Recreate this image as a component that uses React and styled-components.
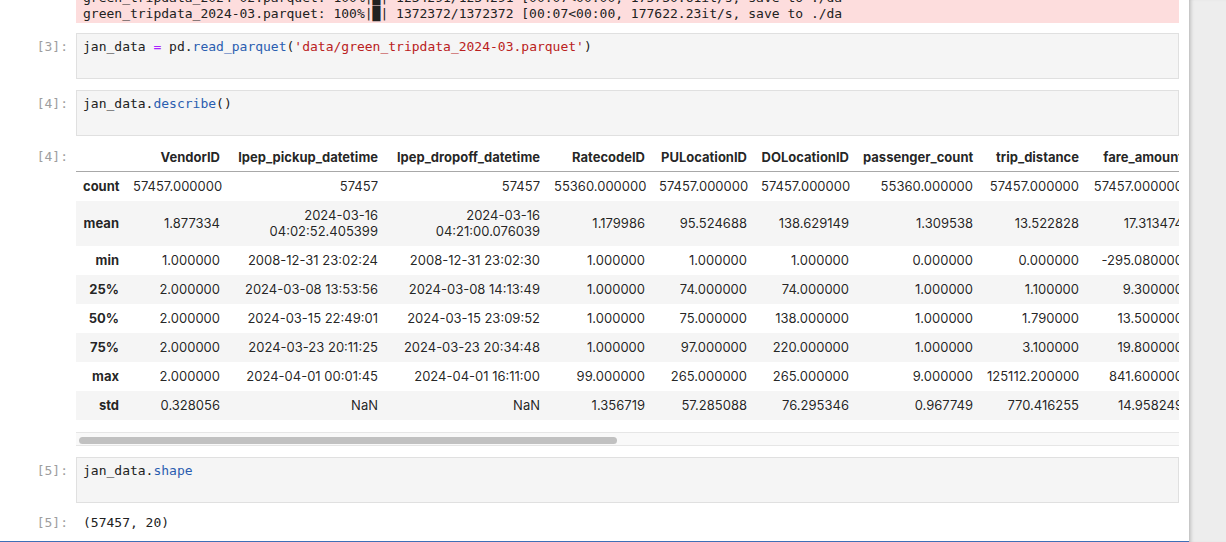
import React from 'react';
import styled, { createGlobalStyle } from 'styled-components';

const GlobalStyle = createGlobalStyle`
  html, body, #root {
    margin: 0;
    padding: 0;
    height: 100%;
    overflow: hidden;
    background: #ffffff;
  }
`;

const Page = styled.div`
  display: flex;
  height: 542px;
  overflow: hidden;
`;

const Panel = styled.main`
  width: 1189px;
  flex-shrink: 0;
  background: #ffffff;
  display: flex;
  flex-direction: column;
`;

const Gutter = styled.div`
  flex: 1;
  background: #ededed;
  box-shadow: inset 4px 0 4px -3px rgba(0, 0, 0, 0.28);
`;

const Cell = styled.section`
  display: flex;
  align-items: flex-start;
  margin-top: ${p => p.$gap}px;
`;

const Prompt = styled.div`
  width: 76px;
  flex-shrink: 0;
  box-sizing: border-box;
  padding: ${p => p.$top}px 8px 0 0;
  text-align: right;
  font-family: "DejaVu Sans Mono", monospace;
  font-size: 13px;
  line-height: 16px;
  color: #9e9e9e;
`;

const Stderr = styled.pre`
  margin: 0;
  width: 1103px;
  box-sizing: border-box;
  padding: 0 7px 1px;
  background: #fddddd;
  font-family: "DejaVu Sans Mono", monospace;
  font-size: 13px;
  line-height: 16px;
  color: #212121;
  white-space: pre;
  overflow: hidden;
`;

const Editor = styled.div`
  width: 1103px;
  height: 46px;
  box-sizing: border-box;
  padding: 5px 6px;
  background: #f5f5f5;
  border: 1px solid #e0e0e0;
  font-family: "DejaVu Sans Mono", monospace;
  font-size: 13px;
  line-height: 16px;
  color: #212121;
  white-space: pre;
`;

const Op = styled.span`
  color: #aa22ff;
`;

const Prop = styled.span`
  color: #2a5db0;
`;

const Str = styled.span`
  color: #ba2121;
`;

const PlainOut = styled.pre`
  margin: 0;
  padding: 0 7px;
  font-family: "DejaVu Sans Mono", monospace;
  font-size: 13px;
  line-height: 16px;
  color: #212121;
`;

const OutputArea = styled.div`
  width: 1103px;
  display: flex;
  flex-direction: column;
`;

const TableScroll = styled.div`
  width: 1103px;
  overflow: hidden;
`;

const Table = styled.table`
  table-layout: fixed;
  border-collapse: collapse;
  border-spacing: 0;
  font-family: Inter, "Liberation Sans", sans-serif;
  font-size: 13px;
  line-height: 16px;
  color: rgba(0, 0, 0, 0.87);
`;

const Col = styled.col`
  width: ${p => p.$w}px;
`;

const HeadRow = styled.tr`
  border-bottom: 1px solid #a8a8a8;
`;

const Th = styled.th`
  padding: 7px 7px 6px;
  text-align: right;
  font-weight: 700;
  white-space: nowrap;
  overflow: visible;
`;

const Row = styled.tr`
  background: ${p => (p.$odd ? '#f5f5f5' : '#ffffff')};
`;

const RowHead = styled.th`
  padding: 6px 7px 7px;
  text-align: right;
  font-weight: 700;
  vertical-align: middle;
`;

const Td = styled.td`
  padding: 6px 7px 7px;
  text-align: right;
  vertical-align: middle;
  overflow: visible;
`;

const ScrollTrack = styled.div`
  margin-top: 12px;
  height: 14px;
  box-sizing: border-box;
  border-top: 1px solid #e6e6e6;
  border-bottom: 1px solid #e6e6e6;
  background: #f9f9f9;
  padding: 4px 3px 0;
`;

const ScrollThumb = styled.div`
  width: 538px;
  height: 7px;
  border-radius: 4px;
  background: #c1c1c1;
`;

const NextCell = styled.div`
  margin-top: 10px;
  border-top: 2px solid #3f6fb6;
`;

const columns = [
  { name: '', w: 50 },
  { name: 'VendorID', w: 101 },
  { name: 'lpep_pickup_datetime', w: 158 },
  { name: 'lpep_dropoff_datetime', w: 162 },
  { name: 'RatecodeID', w: 105 },
  { name: 'PULocationID', w: 102 },
  { name: 'DOLocationID', w: 102 },
  { name: 'passenger_count', w: 124 },
  { name: 'trip_distance', w: 106 },
  { name: 'fare_amount', w: 104 },
];

const rows = [
  ['count', '57457.000000', '57457', '57457', '55360.000000', '57457.000000', '57457.000000', '55360.000000', '57457.000000', '57457.000000'],
  ['mean', '1.877334', '2024-03-16 04:02:52.405399', '2024-03-16 04:21:00.076039', '1.179986', '95.524688', '138.629149', '1.309538', '13.522828', '17.313474'],
  ['min', '1.000000', '2008-12-31 23:02:24', '2008-12-31 23:02:30', '1.000000', '1.000000', '1.000000', '0.000000', '0.000000', '-295.080000'],
  ['25%', '2.000000', '2024-03-08 13:53:56', '2024-03-08 14:13:49', '1.000000', '74.000000', '74.000000', '1.000000', '1.100000', '9.300000'],
  ['50%', '2.000000', '2024-03-15 22:49:01', '2024-03-15 23:09:52', '1.000000', '75.000000', '138.000000', '1.000000', '1.790000', '13.500000'],
  ['75%', '2.000000', '2024-03-23 20:11:25', '2024-03-23 20:34:48', '1.000000', '97.000000', '220.000000', '1.000000', '3.100000', '19.800000'],
  ['max', '2.000000', '2024-04-01 00:01:45', '2024-04-01 16:11:00', '99.000000', '265.000000', '265.000000', '9.000000', '125112.200000', '841.600000'],
  ['std', '0.328056', 'NaN', 'NaN', '1.356719', '57.285088', '76.295346', '0.967749', '770.416255', '14.958249'],
];

const tableWidth = columns.reduce((sum, c) => sum + c.w, 0);

const DescribeTable = () => (
  <TableScroll>
    <Table style={{ width: tableWidth }}>
      <colgroup>
        {columns.map((c, i) => <Col key={i} $w={c.w} />)}
      </colgroup>
      <thead>
        <HeadRow>
          {columns.map((c, i) => <Th key={i}>{c.name}</Th>)}
        </HeadRow>
      </thead>
      <tbody>
        {rows.map((r, i) => (
          <Row key={r[0]} $odd={i % 2 === 1}>
            <RowHead>{r[0]}</RowHead>
            {r.slice(1).map((v, j) => <Td key={j}>{v}</Td>)}
          </Row>
        ))}
      </tbody>
    </Table>
  </TableScroll>
);

const App = () => {
  return (
    <Page>
      <GlobalStyle />
      <Panel>
        <Cell $gap={-10}>
          <Prompt $top={0} />
          <Stderr>
            {'green_tripdata_2024-02.parquet: 100%|█| 1234291/1234291 [00:07<00:00, 175730.61it/s, save to ./da\n'}
            {'green_tripdata_2024-03.parquet: 100%|█| 1372372/1372372 [00:07<00:00, 177622.23it/s, save to ./da'}
          </Stderr>
        </Cell>

        <Cell $gap={10}>
          <Prompt $top={6}>[3]:</Prompt>
          <Editor>
            jan_data <Op>=</Op> pd.<Prop>read_parquet</Prop>(<Str>'data/green_tripdata_2024-03.parquet'</Str>)
          </Editor>
        </Cell>

        <Cell $gap={11}>
          <Prompt $top={6}>[4]:</Prompt>
          <Editor>
            jan_data.<Prop>describe</Prop>()
          </Editor>
        </Cell>

        <Cell $gap={6}>
          <Prompt $top={7}>[4]:</Prompt>
          <OutputArea>
            <DescribeTable />
            <ScrollTrack>
              <ScrollThumb />
            </ScrollTrack>
          </OutputArea>
        </Cell>

        <Cell $gap={11}>
          <Prompt $top={6}>[5]:</Prompt>
          <Editor>
            jan_data.<Prop>shape</Prop>
          </Editor>
        </Cell>

        <Cell $gap={12}>
          <Prompt $top={0}>[5]:</Prompt>
          <PlainOut>(57457, 20)</PlainOut>
        </Cell>

        <NextCell />
      </Panel>
      <Gutter />
    </Page>
  );
};

export default App;
